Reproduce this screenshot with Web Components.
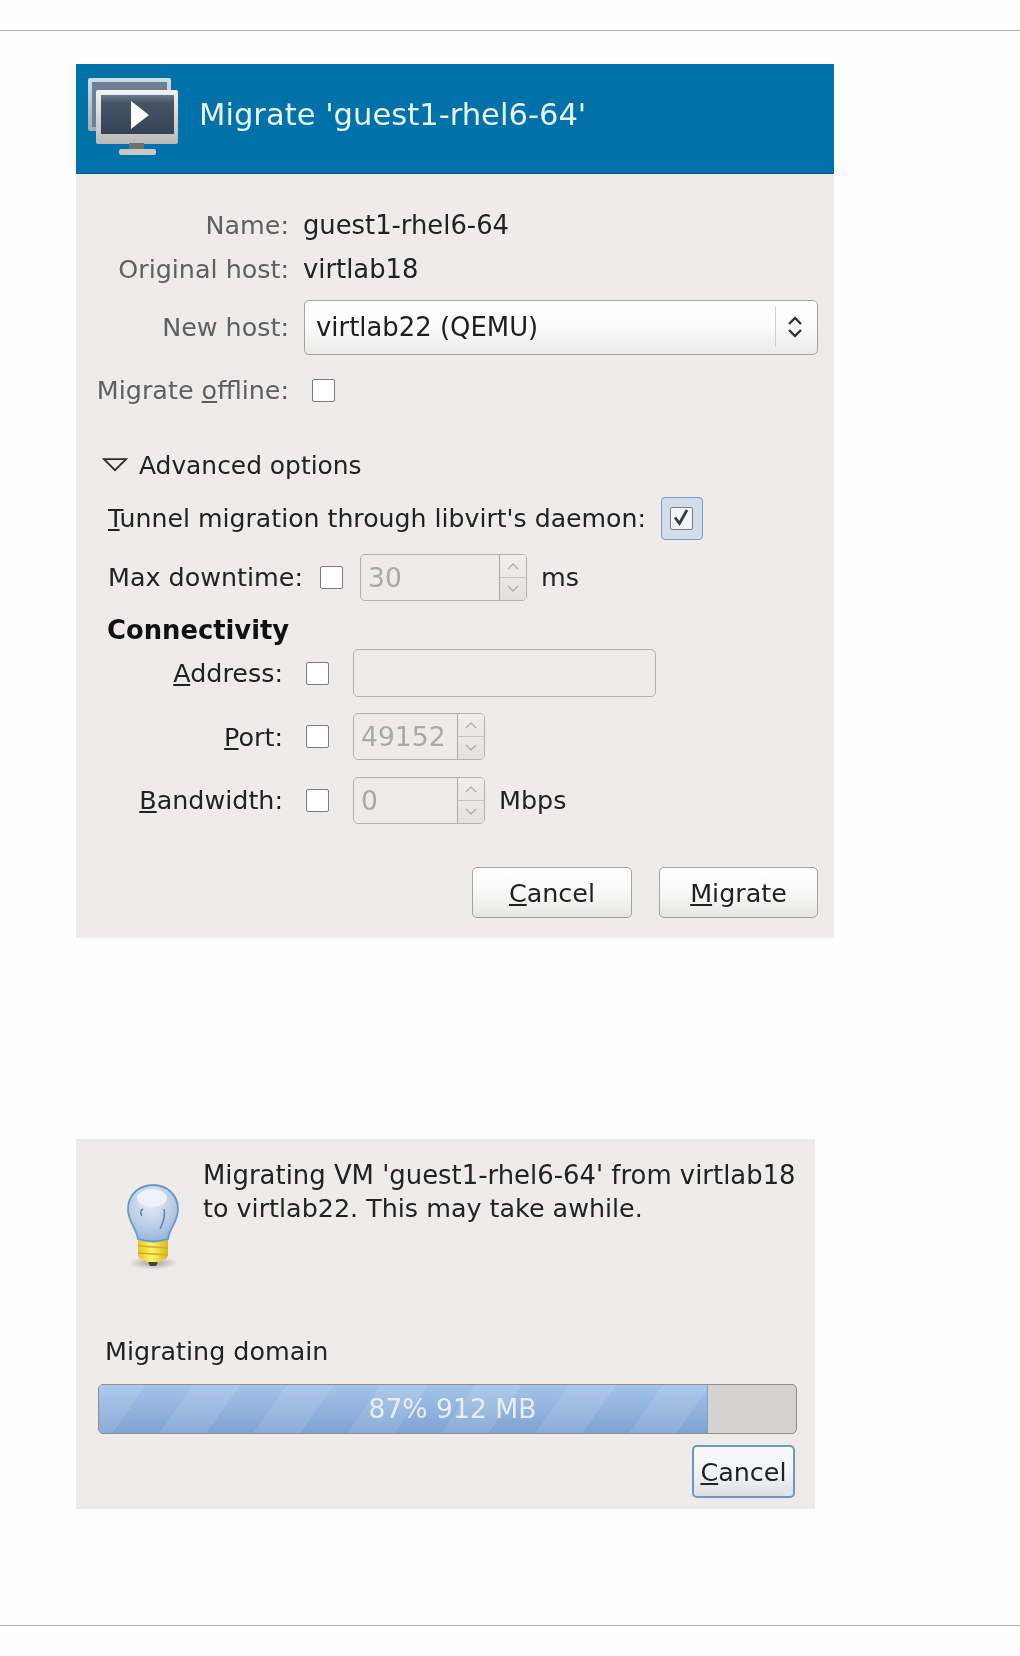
<!DOCTYPE html>
<html>
<head>
<meta charset="utf-8">
<title>Migrate</title>
<style>
    html, body { margin: 0; background: #fefefe; }
    body { font-family: "DejaVu Sans", sans-serif; font-size: 25.4px; color: #222; width: 1020px; height: 1656px; overflow: hidden; }
    u { text-underline-offset: 2px; }
</style>
</head>
<body>
<page-rule style="margin-top:30px"></page-rule>

<migrate-dialog title-text="Migrate 'guest1-rhel6-64'" style="margin-top:33px">
    <info-grid>
        <form-label muted style="height:44px">Name:</form-label><span style="font-size:25.8px">guest1-rhel6-64</span>
        <form-label muted style="height:44px">Original host:</form-label><span style="font-size:25.8px">virtlab18</span>
        <form-label muted style="height:72px">New host:</form-label><combo-box>virtlab22 (QEMU)</combo-box>
        <form-label muted style="height:54px">Migrate <u>o</u>ffline:</form-label><check-box></check-box>
    </info-grid>

    <expander-row>Advanced options</expander-row>

    <tool-row style="height:43px;margin-top:12px;gap:15px;padding-left:32px;font-size:25.2px">
        <span><u>T</u>unnel migration through libvirt's daemon:</span>
        <check-box checked focused></check-box>
    </tool-row>
    <tool-row style="height:48px;margin-top:13px;padding-left:32px">
        <span>Max downtime:</span>
        <check-box style="margin-left:17px"></check-box>
        <spin-entry value="30" style="width:167px;margin-left:17px"></spin-entry>
        <span style="margin-left:14px">ms</span>
    </tool-row>

    <section-title>Connectivity</section-title>

    <connect-grid>
        <form-label><u>A</u>ddress:</form-label>
        <check-box></check-box>
        <plain-entry style="width:303px"></plain-entry>

        <form-label><u>P</u>ort:</form-label>
        <check-box></check-box>
        <spin-entry value="49152" style="width:132px"></spin-entry>

        <form-label><u>B</u>andwidth:</form-label>
        <check-box></check-box>
        <tool-row style="gap:14px">
            <spin-entry value="0" style="width:132px"></spin-entry>
            <span>Mbps</span>
        </tool-row>
    </connect-grid>

    <button-row style="margin-top:43px;gap:27px;padding-bottom:20px">
        <push-button style="width:160px"><u>C</u>ancel</push-button>
        <push-button style="width:159px"><u>M</u>igrate</push-button>
    </button-row>
</migrate-dialog>

<progress-dialog style="margin-top:201px">
    <span slot="message"><span style="font-size:25.9px">Migrating VM 'guest1-rhel6-64' from virtlab18</span><br>to virtlab22. This may take awhile.</span>
</progress-dialog>

<page-rule style="margin-top:116px"></page-rule>

<script>
class PageRule extends HTMLElement {
    constructor() {
        super();
        this.attachShadow({ mode: 'open' });
        this.shadowRoot.innerHTML = `
            <style>
                :host { display: block; height: 1px; background: #b4b4b4; }
            </style>
        `;
    }
}

class MigrateDialog extends HTMLElement {
    constructor() {
        super();
        this.attachShadow({ mode: 'open' });
        this.shadowRoot.innerHTML = `
            <style>
                :host { display: block; width: 758px; margin-left: 76px; background: #edeceb; filter: blur(.45px); }
                .banner {
                    height: 109px;
                    background: #0071a9;
                    border-bottom: 1px solid #0b5a80;
                    display: flex;
                    align-items: center;
                    gap: 20px;
                    padding-left: 11px;
                    color: #e6f3f8;
                    font-size: 30.6px;
                }
                .banner span { position: relative; top: -4px; }
                .body { padding-top: 29px; }
            </style>
            <div class="banner">
                <svg width="92" height="82" viewBox="0 0 92 82" style="margin-top:-1px">
                    <defs>
                        <linearGradient id="scr" x1="0" y1="0" x2="0" y2="1">
                            <stop offset="0" stop-color="#6a7a8e"/>
                            <stop offset="0.2" stop-color="#465468"/>
                            <stop offset="1" stop-color="#344357"/>
                        </linearGradient>
                        <linearGradient id="fr" x1="0" y1="0" x2="0" y2="1">
                            <stop offset="0" stop-color="#f2f2f2"/>
                            <stop offset="1" stop-color="#b9bab8"/>
                        </linearGradient>
                    </defs>
                    <rect x="1" y="1" width="83" height="53" rx="2" fill="url(#fr)" opacity=".85"/>
                    <rect x="5" y="5" width="75" height="45" fill="#6c7f93"/>
                    <rect x="9" y="13" width="82" height="54" rx="2" fill="url(#fr)"/>
                    <rect x="14" y="18" width="73" height="39" fill="url(#scr)"/>
                    <path d="M44 24 L62 38 L44 52 Z" fill="#fdfdfd"/>
                    <rect x="42" y="66" width="15" height="7" fill="#6f7170"/>
                    <rect x="32" y="72" width="37" height="6" rx="2" fill="#c8c9c7"/>
                </svg>
                <span>${this.getAttribute('title-text')}</span>
            </div>
            <div class="body"><slot></slot></div>
        `;
    }
}

class InfoGrid extends HTMLElement {
    constructor() {
        super();
        this.attachShadow({ mode: 'open' });
        this.shadowRoot.innerHTML = `
            <style>
                :host {
                    display: grid;
                    grid-template-columns: 213px 1fr;
                    column-gap: 14px;
                    align-items: center;
                    justify-items: start;
                    padding-right: 16px;
                }
                ::slotted(combo-box) { justify-self: stretch; margin-left: 1px; }
                ::slotted(check-box) { margin-left: 9px; }
            </style>
            <slot></slot>
        `;
    }
}

class FormLabel extends HTMLElement {
    constructor() {
        super();
        this.attachShadow({ mode: 'open' });
        this.shadowRoot.innerHTML = `
            <style>
                :host {
                    display: flex;
                    align-items: center;
                    justify-content: flex-end;
                    justify-self: stretch;
                    white-space: pre;
                }
                :host([muted]) { color: #606060; }
            </style>
            <span><slot></slot></span>
        `;
    }
}

class CheckBox extends HTMLElement {
    constructor() {
        super();
        this.attachShadow({ mode: 'open' });
        const checked = this.hasAttribute('checked');
        this.shadowRoot.innerHTML = `
            <style>
                :host { display: inline-flex; align-items: center; justify-content: center; width: 23px; height: 23px; flex: none; }
                :host([focused]) {
                    width: 40px;
                    height: 41px;
                    background: #d3dce9;
                    border: 1px solid #7e9dc4;
                    border-radius: 4px;
                }
                .box {
                    width: 23px;
                    height: 23px;
                    box-sizing: border-box;
                    background: #fff;
                    border: 1.5px solid #7c7c7c;
                    border-radius: 2px;
                    display: block;
                }
                :host([focused]) .box { background: #f2f4f7; }
                svg { display: block; }
            </style>
            <span class="box">
                ${checked ? '<svg width="20" height="20" viewBox="0 0 20 20"><path d="M4 9.5 L8.5 15.5 L16 2" fill="none" stroke="#333b44" stroke-width="2.8"/></svg>' : ''}
            </span>
        `;
    }
}

class ComboBox extends HTMLElement {
    constructor() {
        super();
        this.attachShadow({ mode: 'open' });
        this.shadowRoot.innerHTML = `
            <style>
                :host {
                    display: flex;
                    align-items: center;
                    height: 55px;
                    box-sizing: border-box;
                    border: 1.5px solid #a5a4a1;
                    border-radius: 5px;
                    background: linear-gradient(#fff 0%, #fbfbfb 50%, #e9e9e8 100%);
                    padding-left: 11px;
                    color: #1e1e1e;
                    font-size: 25.9px;
                }
                .txt { flex: 1; }
                .sep { width: 1px; height: 40px; background: #cfcfcd; }
                svg { margin: 0 14px 0 11px; display: block; }
            </style>
            <span class="txt"><slot></slot></span>
            <span class="sep"></span>
            <svg width="16" height="24" viewBox="0 0 16 24">
                <path d="M2 9 L8 3 L14 9 M2 15 L8 21 L14 15" fill="none" stroke="#333" stroke-width="2.4"/>
            </svg>
        `;
    }
}

class ExpanderRow extends HTMLElement {
    constructor() {
        super();
        this.attachShadow({ mode: 'open' });
        this.shadowRoot.innerHTML = `
            <style>
                :host {
                    display: flex;
                    align-items: center;
                    gap: 11px;
                    height: 40px;
                    margin-top: 28px;
                    padding-left: 26px;
                    font-size: 24.9px;
                }
                svg { display: block; }
            </style>
            <svg width="26" height="14" viewBox="0 0 26 14">
                <path d="M2 1.2 H24 L13 12.2 Z" fill="none" stroke="#2e2e2e" stroke-width="1.7"/>
            </svg>
            <span><slot></slot></span>
        `;
    }
}

class ToolRow extends HTMLElement {
    constructor() {
        super();
        this.attachShadow({ mode: 'open' });
        this.shadowRoot.innerHTML = `
            <style>
                :host { display: flex; align-items: center; }
            </style>
            <slot></slot>
        `;
    }
}

class SectionTitle extends HTMLElement {
    constructor() {
        super();
        this.attachShadow({ mode: 'open' });
        this.shadowRoot.innerHTML = `
            <style>
                :host {
                    display: block;
                    font-weight: bold;
                    font-size: 25.8px;
                    color: #111;
                    padding-left: 31px;
                    height: 36px;
                    line-height: 58px;
                    margin-bottom: 12px;
                }
            </style>
            <slot></slot>
        `;
    }
}

class ConnectGrid extends HTMLElement {
    constructor() {
        super();
        this.attachShadow({ mode: 'open' });
        this.shadowRoot.innerHTML = `
            <style>
                :host {
                    display: grid;
                    grid-template-columns: 207px 23px 1fr;
                    grid-template-rows: 48px 47px 48px;
                    row-gap: 16px;
                    align-items: center;
                    justify-items: start;
                }
                ::slotted(check-box) { margin-left: 23px; }
                ::slotted(plain-entry), ::slotted(spin-entry), ::slotted(tool-row) { margin-left: 47px; }
            </style>
            <slot></slot>
        `;
    }
}

class PlainEntry extends HTMLElement {
    constructor() {
        super();
        this.attachShadow({ mode: 'open' });
        this.shadowRoot.innerHTML = `
            <style>
                :host {
                    display: block;
                    height: 48px;
                    box-sizing: border-box;
                    border: 1.5px solid #b3b2af;
                    border-radius: 5px;
                    background: #edeceb;
                }
            </style>
        `;
    }
}

class SpinEntry extends HTMLElement {
    constructor() {
        super();
        this.attachShadow({ mode: 'open' });
        const chev = 'fill="none" stroke="#b0b0ae" stroke-width="1.4"';
        this.shadowRoot.innerHTML = `
            <style>
                :host {
                    display: flex;
                    height: 47px;
                    box-sizing: border-box;
                    border: 1.5px solid #b3b2af;
                    border-radius: 5px;
                    background: #edeceb;
                    color: #a9a9a7;
                    font-size: 26.6px;
                }
                .val { flex: 1; display: flex; align-items: center; padding-left: 7px; }
                .btns {
                    width: 26px;
                    border-left: 1.5px solid #a9a8a5;
                    display: flex;
                    flex-direction: column;
                    background: linear-gradient(#f0efee, #e3e2e0);
                    border-radius: 0 4px 4px 0;
                }
                .btns div { flex: 1; display: flex; align-items: center; justify-content: center; }
                .btns div + div { border-top: 1px solid #c4c3c0; }
                svg { display: block; }
            </style>
            <span class="val">${this.getAttribute('value')}</span>
            <span class="btns">
                <div><svg width="14" height="8" viewBox="0 0 14 8"><path d="M2 7 L7 2 L12 7" ${chev}/></svg></div>
                <div><svg width="14" height="8" viewBox="0 0 14 8"><path d="M2 1 L7 6 L12 1" ${chev}/></svg></div>
            </span>
        `;
    }
}

class ButtonRow extends HTMLElement {
    constructor() {
        super();
        this.attachShadow({ mode: 'open' });
        this.shadowRoot.innerHTML = `
            <style>
                :host { display: flex; justify-content: flex-end; padding-right: 16px; }
            </style>
            <slot></slot>
        `;
    }
}

class PushButton extends HTMLElement {
    constructor() {
        super();
        this.attachShadow({ mode: 'open' });
        this.shadowRoot.innerHTML = `
            <style>
                :host {
                    display: flex;
                    align-items: center;
                    justify-content: center;
                    height: 51px;
                    box-sizing: border-box;
                    border: 1.5px solid #a5a4a1;
                    border-radius: 5px;
                    background: linear-gradient(#fff 0%, #f9f9f8 50%, #e6e6e5 100%);
                    color: #222;
                }
                :host([focused]) {
                    border: 2px solid #6f95c4;
                    background: linear-gradient(#f7f9fc 0%, #f2f4f8 50%, #dde1e7 100%);
                }
            </style>
            <span><slot></slot></span>
        `;
    }
}

class ProgressDialog extends HTMLElement {
    constructor() {
        super();
        this.attachShadow({ mode: 'open' });
        this.shadowRoot.innerHTML = `
            <style>
                :host { display: block; width: 739px; height: 370px; margin-left: 76px; background: #edeceb; box-sizing: border-box; padding: 20px 18px 0 22px; filter: blur(.45px); }
                .top { display: flex; height: 173px; }
                .bulb { width: 105px; flex: none; padding-top: 24px; box-sizing: border-box; }
                .bulb svg { display: block; margin-left: 25px; }
                .msg { line-height: 33px; white-space: nowrap; }
                .name { padding-left: 7px; height: 38px; line-height: 38px; color: #222; }
                .bar {
                    position: relative;
                    height: 50px;
                    margin-top: 14px;
                    box-sizing: border-box;
                    border: 1.5px solid #8f8f8d;
                    border-radius: 5px;
                    background: #d4d3d1;
                    overflow: hidden;
                }
                .fill {
                    width: 87.4%;
                    height: 100%;
                    border-right: 1px solid #7fa0cc;
                    box-sizing: border-box;
                    background:
                        repeating-linear-gradient(125deg, rgba(255,255,255,.1) 0 38.5px, rgba(255,255,255,0) 38.5px 77px),
                        linear-gradient(#a5c3e8, #7ea3d3);
                }
                .pct {
                    position: absolute;
                    inset: -2px 0 0 10px;
                    display: flex;
                    align-items: center;
                    justify-content: center;
                    color: #e8eef7;
                    font-size: 26.6px;
                }
                .foot { display: flex; justify-content: flex-end; margin-top: 11px; padding-right: 2px; }
                .foot push-button { width: 103px; height: 53px; }
            </style>
            <div class="top">
                <div class="bulb">
                    <svg width="60" height="88" viewBox="0 0 60 88">
                        <defs>
                            <radialGradient id="glass" cx=".45" cy=".3" r=".75">
                                <stop offset="0" stop-color="#e8eef6"/>
                                <stop offset=".6" stop-color="#b9cde6"/>
                                <stop offset="1" stop-color="#8fb0d8"/>
                            </radialGradient>
                            <linearGradient id="brass" x1="0" y1="0" x2="1" y2="0">
                                <stop offset="0" stop-color="#e6c81f"/>
                                <stop offset=".45" stop-color="#fff06a"/>
                                <stop offset="1" stop-color="#d9b81a"/>
                            </linearGradient>
                            <radialGradient id="shade" cx=".5" cy=".5" r=".5">
                                <stop offset="0" stop-color="#555" stop-opacity=".55"/>
                                <stop offset="1" stop-color="#777" stop-opacity="0"/>
                            </radialGradient>
                        </defs>
                        <ellipse cx="30" cy="80" rx="25" ry="7" fill="url(#shade)"/>
                        <path d="M15 55 H45 V72 Q45 76 39 77 L35 80 H25 L21 77 Q15 76 15 72 Z" fill="url(#brass)"/>
                        <path d="M15 63 L45 65 M15 70 L45 72" stroke="#d2ad1f" stroke-width="1.4"/>
                        <path d="M25 79 H35 L33 83 H27 Z" fill="#444"/>
                        <path d="M30 2 C16 2 5 12 5 26 C5 39 13 44 15 56 Q30 61 45 56 C47 44 55 39 55 26 C55 12 44 2 30 2 Z" fill="url(#glass)" stroke="#6d97cb" stroke-width="1.8"/>
                        <ellipse cx="29" cy="15" rx="15" ry="9" fill="#eef3f9"/>
                        <path d="M19 33 Q16 28 20 26 M41 26 Q43 34 37 46" fill="none" stroke="#5f7a9c" stroke-width="1.4"/>
                    </svg>
                </div>
                <div class="msg"><slot name="message"></slot></div>
            </div>
            <div class="name">Migrating domain</div>
            <div class="bar">
                <div class="fill"></div>
                <div class="pct">87% 912 MB</div>
            </div>
            <div class="foot"><push-button focused><u style="text-underline-offset:2px">C</u>ancel</push-button></div>
        `;
    }
}

customElements.define('page-rule', PageRule);
customElements.define('migrate-dialog', MigrateDialog);
customElements.define('info-grid', InfoGrid);
customElements.define('form-label', FormLabel);
customElements.define('check-box', CheckBox);
customElements.define('combo-box', ComboBox);
customElements.define('expander-row', ExpanderRow);
customElements.define('tool-row', ToolRow);
customElements.define('section-title', SectionTitle);
customElements.define('connect-grid', ConnectGrid);
customElements.define('plain-entry', PlainEntry);
customElements.define('spin-entry', SpinEntry);
customElements.define('button-row', ButtonRow);
customElements.define('push-button', PushButton);
customElements.define('progress-dialog', ProgressDialog);
</script>
</body>
</html>
